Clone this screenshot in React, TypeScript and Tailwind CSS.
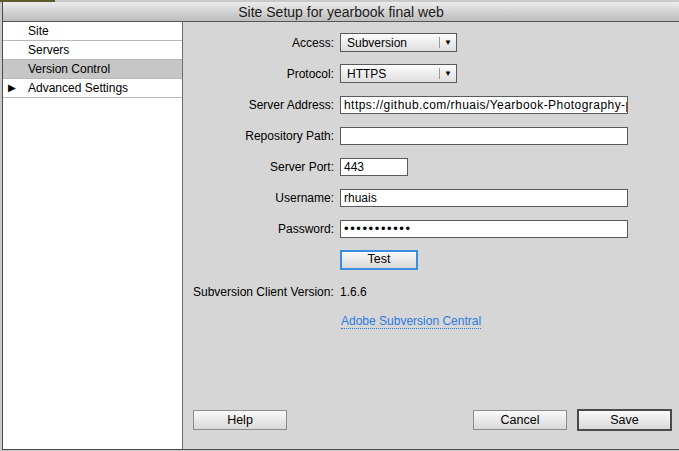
import React from 'react'

const font = { fontFamily: '"Lucida Grande", "Liberation Sans", Arial, sans-serif' }

const navItems = [
  { label: 'Site', selected: false, arrow: false },
  { label: 'Servers', selected: false, arrow: false },
  { label: 'Version Control', selected: true, arrow: false },
  { label: 'Advanced Settings', selected: false, arrow: true },
]

function Select({ value }: { value: string }) {
  return (
    <div className="flex h-[19px] w-[117px] items-center border border-[#5a5a5a] bg-gradient-to-b from-[#fdfdfd] to-[#dedede]">
      <span className="flex-1 pl-[6px] text-[12px] leading-none text-black">{value}</span>
      <span className="h-[11px] w-px bg-[#9a9a9a]" />
      <span className="flex w-[16px] justify-center text-[8px] leading-none text-black">▼</span>
    </div>
  )
}

function TextField({ value, width = 'w-[288px]', extra = '' }: { value?: string; width?: string; extra?: string }) {
  return (
    <div
      className={`flex h-[18px] ${width} items-center overflow-hidden whitespace-nowrap border border-[#5a5a5a] bg-white pl-[3px] text-[12px] leading-none text-black ${extra}`}
    >
      {value}
    </div>
  )
}

function Button({ label, kind = 'plain', width = 'w-[94px]' }: { label: string; kind?: 'plain' | 'default' | 'focus'; width?: string }) {
  const border =
    kind === 'default'
      ? 'border-2 border-[#4a4a4a] h-[22px]'
      : kind === 'focus'
        ? 'border-2 border-[#3a8de0] h-[20px]'
        : 'border border-[#8c8c8c] h-[20px]'
  return (
    <button
      className={`${width} ${border} flex items-center justify-center bg-gradient-to-b from-[#fafafa] to-[#d9d9d9] text-[12.5px] leading-none text-black`}
    >
      {label}
    </button>
  )
}

function Row({ label, children }: { label: string; children: React.ReactNode }) {
  return (
    <>
      <div className="flex h-[19px] items-center justify-end text-[12px] leading-none text-black">{label}</div>
      <div className="flex h-[19px] items-center">{children}</div>
    </>
  )
}

export default function App() {
  return (
    <div style={font} className="relative h-[451px] w-[679px] overflow-hidden bg-[#c9c9c9] pl-[2px] pt-[2px]">
      <div className="absolute left-0 top-0 h-[2px] w-[55px] bg-[#5c5a2c]" />
      <div className="flex h-[448px] w-[677px] flex-col border-b border-l border-[#4a4a4a] bg-[#d6d6d6]">
        {/* title bar */}
        <div className="flex h-[20px] shrink-0 items-center justify-center border-b border-[#555] bg-gradient-to-b from-[#ececec] to-[#bdbdbd] text-[14px] leading-none text-[#1a1a1a]">
          Site Setup for yearbook final web
        </div>

        <div className="flex min-h-0 flex-1">
          {/* sidebar */}
          <div className="w-[180px] shrink-0 border-r border-[#6e6e6e] bg-white">
            {navItems.map((item) => (
              <div
                key={item.label}
                className={`flex h-[19px] items-center border-b border-[#b9b9b9] text-[12px] leading-none text-black ${item.selected ? 'bg-[#c6c6c6]' : ''}`}
              >
                <span className="w-[25px] pl-[5px] text-[10px]">{item.arrow ? '▶' : ''}</span>
                {item.label}
              </div>
            ))}
          </div>

          {/* form panel */}
          <div className="flex flex-1 flex-col pb-[18px] pl-[10px] pr-[7px] pt-[11px]">
            <div className="grid grid-cols-[141px_288px] gap-x-[6px] gap-y-[12px]">
              <Row label="Access:">
                <Select value="Subversion" />
              </Row>
              <Row label="Protocol:">
                <Select value="HTTPS" />
              </Row>
              <Row label="Server Address:">
                <TextField value="https://github.com/rhuais/Yearbook-Photography-project" extra="tracking-[0.45px]" />
              </Row>
              <Row label="Repository Path:">
                <TextField />
              </Row>
              <Row label="Server Port:">
                <TextField value="443" width="w-[68px]" />
              </Row>
              <Row label="Username:">
                <TextField value="rhuais" />
              </Row>
              <Row label="Password:">
                <TextField value="•••••••••••" extra="!text-[13px] tracking-[1.6px]" />
              </Row>
              <div />
              <div className="flex h-[19px] items-center">
                <Button label="Test" kind="focus" width="w-[78px]" />
              </div>
            </div>

            <div className="mt-[17px] flex text-[12px] leading-none text-black">
              <span className="w-[147px]">Subversion Client Version:</span>
              <span>1.6.6</span>
            </div>
            <div className="mt-[17px] pl-[148px] text-[12px] leading-none">
              <span className="border-b border-dotted border-[#2a7be0] text-[#2a7be0]">Adobe Subversion Central</span>
            </div>

            <div className="mt-auto flex items-center justify-between">
              <Button label="Help" width="w-[94px]" />
              <div className="flex items-center gap-[10px]">
                <Button label="Cancel" width="w-[94px]" />
                <Button label="Save" kind="default" width="w-[95px]" />
              </div>
            </div>
          </div>
        </div>
      </div>
    </div>
  )
}
